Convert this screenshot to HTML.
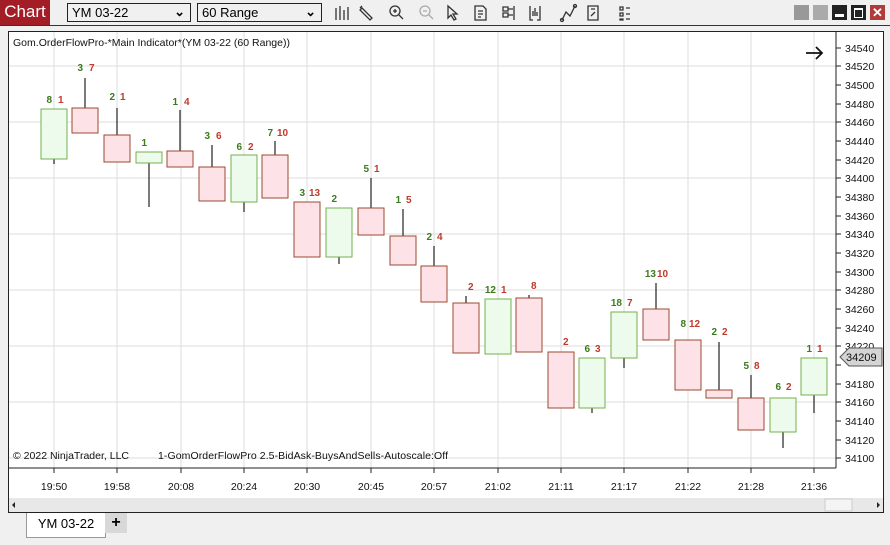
<!DOCTYPE html>
<html><head><meta charset="utf-8"><style>
body{margin:0;width:890px;height:545px;background:#f0f0f0;font-family:"Liberation Sans",sans-serif;position:relative;overflow:hidden}
.tb{position:absolute;left:0;top:0;width:890px;height:25px;background:#f0f0f0;border-bottom:1px solid #333}
.chartlbl{position:absolute;left:0;top:0;width:50px;height:25px;background:#a31d26;color:#fff;font-size:17px;line-height:24px;text-align:center}
.dd{position:absolute;top:3px;border:1px solid #222;background:#f0f0f0;font-size:13px;line-height:17px;padding-left:4px;box-sizing:border-box;height:19px}
.dd span{position:absolute;right:5px;top:-1px;font-size:13px;font-weight:bold}
.win{position:absolute;left:8px;top:31px;width:876px;height:482px;background:#fff;border:1px solid #222;box-sizing:border-box}
.btn{position:absolute;top:5px;width:15px;height:15px}
</style></head><body>
<div class="tb">
<div class="chartlbl">Chart</div>
<div class="dd" style="left:67px;width:124px">YM 03-22<span>&#8964;</span></div>
<div class="dd" style="left:197px;width:125px">60 Range<span>&#8964;</span></div>
<svg style="position:absolute;left:330px;top:2px" width="300" height="22" fill="none" stroke="#333" stroke-width="1.3">
<path d="M6 6v12M10 4v14M14 8v10M18 5v13"/>
<path d="M32 6l10 10l-2 2l-10-10z M30 6l2 -2"/>
<circle cx="65" cy="9" r="5"/><path d="M69 13l4 4M63 9h4M65 7v4"/>
<circle cx="95" cy="9" r="5" stroke="#aaa"/><path d="M99 13l4 4M93 9h4" stroke="#aaa"/>
<path d="M118 4v12l3-3l3 5l2-1l-3-5h4z"/>
<path d="M145 4h8l3 3v11h-11zM148 9h5M148 12h5M148 15h3"/>
<path d="M173 5h5v4h-5zM173 11h5v4h-5zM178 7h5M178 13h5M184 4v14"/>
<path d="M200 4v14h3M210 4v14h-3M203 14v-5M205 14v-8M207 14v-4"/>
<path d="M232 18l4-8l4 4l5-10" /><circle cx="232" cy="18" r="1.5"/><circle cx="245" cy="4" r="1.5"/>
<path d="M258 4h10v14h-10zM261 7h4M261 14l4-4"/>
<path d="M290 5h3v3h-3zM290 11h3v3h-3zM290 17h3v1h-3zM296 6h10M296 12h10M296 17h10"/>
</svg>
<div class="btn" style="left:794px;background:#999"></div>
<div class="btn" style="left:813px;background:#aaa"></div>
<div class="btn" style="left:832px;background:#222"><div style="position:absolute;left:3px;top:9px;width:9px;height:3px;background:#fff"></div></div>
<div class="btn" style="left:851px;background:#222"><div style="position:absolute;left:3px;top:3px;width:7px;height:7px;border:1px solid #fff;border-top-width:2px"></div></div>
<div class="btn" style="left:870px;background:#b23a3a;color:#fff;font-size:13px;font-weight:bold;line-height:15px;text-align:center">&#10005;</div>
</div>
<div class="win"></div>
<svg style="position:absolute;left:0;top:0" width="890" height="545" font-family="Liberation Sans, sans-serif">
<g stroke="#dcdcdc" stroke-width="1">
<path d="M54 32V468M117 32V468M181 32V468M244 32V468M307 32V468M371 32V468M434 32V468M498 32V468M561 32V468M624 32V468M688 32V468M751 32V468M814 32V468"/>
<path d="M9 66H836M9 122H836M9 178H836M9 234H836M9 290H836M9 346H836M9 402H836M9 458H836"/>
</g>
<path d="M836 32V468M9 468H836" stroke="#222"/>
<g stroke="#222">
<path d="M836 48h5M836 66h5M836 85h5M836 104h5M836 122h5M836 141h5M836 160h5M836 178h5M836 197h5M836 216h5M836 234h5M836 253h5M836 272h5M836 290h5M836 309h5M836 328h5M836 346h5M836 365h5M836 384h5M836 402h5M836 421h5M836 440h5M836 458h5"/>
<path d="M54 468v5M117 468v5M181 468v5M244 468v5M307 468v5M371 468v5M434 468v5M498 468v5M561 468v5M624 468v5M688 468v5M751 468v5M814 468v5"/>
</g>
<g font-size="10.5" fill="#111">
<text x="845" y="52">34540</text><text x="845" y="70">34520</text><text x="845" y="89">34500</text><text x="845" y="108">34480</text><text x="845" y="126">34460</text><text x="845" y="145">34440</text><text x="845" y="164">34420</text><text x="845" y="182">34400</text><text x="845" y="201">34380</text><text x="845" y="220">34360</text><text x="845" y="238">34340</text><text x="845" y="257">34320</text><text x="845" y="276">34300</text><text x="845" y="294">34280</text><text x="845" y="313">34260</text><text x="845" y="332">34240</text><text x="845" y="350">34220</text><text x="845" y="388">34180</text><text x="845" y="406">34160</text><text x="845" y="425">34140</text><text x="845" y="444">34120</text><text x="845" y="462">34100</text>
</g>
<path d="M849 348h33v18h-33l-9-9z" fill="#d4d4d4" stroke="#555"/>
<text x="846" y="361" font-size="11" fill="#111">34209</text>
<g font-size="10.5" fill="#111" text-anchor="middle">
<text x="54" y="490">19:50</text><text x="117" y="490">19:58</text><text x="181" y="490">20:08</text><text x="244" y="490">20:24</text><text x="307" y="490">20:30</text><text x="371" y="490">20:45</text><text x="434" y="490">20:57</text><text x="498" y="490">21:02</text><text x="561" y="490">21:11</text><text x="624" y="490">21:17</text><text x="688" y="490">21:22</text><text x="751" y="490">21:28</text><text x="814" y="490">21:36</text>
</g>
<rect x="9" y="498" width="874" height="14" fill="#e8e8e8"/>
<rect x="825" y="499" width="27" height="12" fill="#f4f4f4" stroke="#ccc"/>
<path d="M12 505l3-3v6zM880 505l-3-3v6z" fill="#222"/>
<text x="13" y="46" font-size="10.5" fill="#111" textLength="277">Gom.OrderFlowPro-*Main Indicator*(YM 03-22 (60 Range))</text>
<text x="13" y="459" font-size="10.5" fill="#111" textLength="116">© 2022 NinjaTrader, LLC</text>
<text x="158" y="459" font-size="10.5" fill="#111" textLength="290">1-GomOrderFlowPro 2.5-BidAsk-BuysAndSells-Autoscale:Off</text>
<path d="M806 53h16M816 47l6 6l-6 6" stroke="#111" stroke-width="1.8" fill="none"/>
<g stroke="#222" stroke-width="1.2">
<path d="M54 159v5M85 78v30M117 108v27M149 163v44M180 110v41M212 145v22M244 202v10M275 141v14M339 257v7M371 178v30M403 209v27M434 246v20M466 296v7M529 295v3M592 408v5M624 358v10M656 283v26M719 342v48M751 375v23M783 432v16M814 395v18"/>
</g>
<g stroke="#74b04e" fill="#ecfbec">
<rect x="41" y="109" width="26" height="50"/><rect x="136" y="152" width="26" height="11"/><rect x="231" y="155" width="26" height="47"/><rect x="326" y="208" width="26" height="49"/><rect x="485" y="299" width="26" height="55"/><rect x="579" y="358" width="26" height="50"/><rect x="611" y="312" width="26" height="46"/><rect x="770" y="398" width="26" height="34"/><rect x="801" y="358" width="26" height="37"/>
</g>
<g stroke="#9c4a30" fill="#fde3e7">
<rect x="72" y="108" width="26" height="25"/><rect x="104" y="135" width="26" height="27"/><rect x="167" y="151" width="26" height="16"/><rect x="199" y="167" width="26" height="34"/><rect x="262" y="155" width="26" height="43"/><rect x="294" y="202" width="26" height="55"/><rect x="358" y="208" width="26" height="27"/><rect x="390" y="236" width="26" height="29"/><rect x="421" y="266" width="26" height="36"/><rect x="453" y="303" width="26" height="50"/><rect x="516" y="298" width="26" height="54"/><rect x="548" y="352" width="26" height="56"/><rect x="643" y="309" width="26" height="31"/><rect x="675" y="340" width="26" height="50"/><rect x="706" y="390" width="26" height="8"/><rect x="738" y="398" width="26" height="32"/>
</g>
<g font-size="10" font-weight="bold" fill="#3c7a1e" text-anchor="end">
<text x="52" y="103">8</text><text x="83" y="71">3</text><text x="115" y="100">2</text><text x="147" y="146">1</text><text x="178" y="105">1</text><text x="210" y="139">3</text><text x="242" y="150">6</text><text x="273" y="136">7</text><text x="305" y="196">3</text><text x="337" y="202">2</text><text x="369" y="172">5</text><text x="401" y="203">1</text><text x="432" y="240">2</text><text x="496" y="293">12</text><text x="590" y="352">6</text><text x="622" y="306">18</text><text x="656" y="277">13</text><text x="686" y="327">8</text><text x="717" y="335">2</text><text x="749" y="369">5</text><text x="781" y="390">6</text><text x="812" y="352">1</text>
</g>
<g font-size="10" font-weight="bold" fill="#c0392b">
<text x="58" y="103">1</text><text x="89" y="71">7</text><text x="120" y="100">1</text><text x="184" y="105">4</text><text x="216" y="139">6</text><text x="248" y="150">2</text><text x="277" y="136">10</text><text x="309" y="196">13</text><text x="374" y="172">1</text><text x="406" y="203">5</text><text x="437" y="240">4</text><text x="468" y="290">2</text><text x="501" y="293">1</text><text x="531" y="289">8</text><text x="563" y="345">2</text><text x="595" y="352">3</text><text x="627" y="306">7</text><text x="657" y="277">10</text><text x="689" y="327">12</text><text x="722" y="335">2</text><text x="754" y="369">8</text><text x="786" y="390">2</text><text x="817" y="352">1</text>
</g>
</svg>
<div style="position:absolute;left:26px;top:513px;width:78px;height:24px;background:#fff;border:1px solid #999;border-top:none;font-size:13px;line-height:22px;text-align:center">YM 03-22</div>
<div style="position:absolute;left:105px;top:513px;width:22px;height:20px;background:#d8d8d8;font-size:16px;font-weight:bold;line-height:20px;text-align:center">+</div>
</body></html>
